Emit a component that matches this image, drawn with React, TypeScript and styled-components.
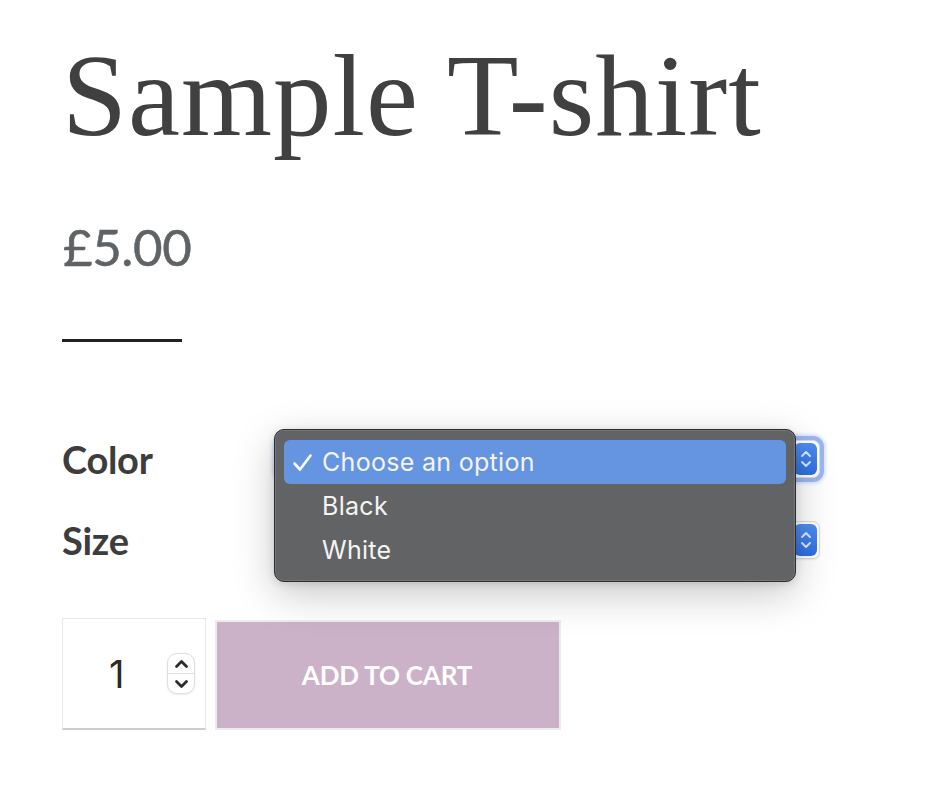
import React from "react";
import styled, { createGlobalStyle } from "styled-components";

const Global = createGlobalStyle`
  html, body { margin: 0; padding: 0; background: #ffffff; }
  body { font-family: "Lato", "Open Sans", sans-serif; }
`;

const Page = styled.div`
  padding: 37px 0 0 62px;
  width: 934px;
  height: 812px;
  box-sizing: border-box;
  position: relative;
  overflow: hidden;
`;

const Title = styled.h1`
  margin: 0;
  font-family: "Liberation Serif", "Times New Roman", serif;
  font-weight: 400;
  font-size: 117px;
  line-height: 117px;
  color: #404040;
  letter-spacing: 1px;
`;

const Price = styled.p`
  margin: 68px 0 0 1px;
  font-family: "Lato", sans-serif;
  font-size: 51px;
  line-height: 50px;
  color: #5f6366;
  letter-spacing: -0.4px;
  -webkit-text-stroke: 0.5px #5f6366;
`;

const Divider = styled.hr`
  margin: 67px 0 0 0;
  width: 120px;
  height: 3px;
  border: 0;
  background: #222222;
`;

const Variations = styled.div`
  margin-top: 76px;
  display: flex;
  flex-direction: column;
  position: relative;
`;

const Row = styled.div`
  height: 81px;
  display: grid;
  grid-template-columns: 216px 542px;
  align-items: center;
`;

const Label = styled.label`
  font-family: "Lato", sans-serif;
  font-weight: 700;
  font-size: 38px;
  line-height: 44px;
  color: #3d3d3d;
  letter-spacing: -0.3px;
`;

const SelectBox = styled.div<{ $focused?: boolean }>`
  height: 38px;
  box-sizing: border-box;
  border-radius: 7px;
  background: #ffffff;
  border: 1px solid #dcdcdc;
  box-shadow: ${(p) =>
    p.$focused
      ? "0 0 0 4px rgba(110, 150, 240, 0.6), 0 0 3px 6px rgba(110,150,240,0.25)"
      : "0 1px 2px rgba(0,0,0,0.08)"};
  display: flex;
  align-items: center;
  justify-content: flex-end;
  padding: 0 2px 0 12px;
`;

const Stepper = styled.div`
  width: 23px;
  height: 32px;
  border-radius: 6px;
  background: linear-gradient(#4d8ef2, #2f6fe0);
  display: flex;
  align-items: center;
  justify-content: center;
`;

const Popup = styled.div`
  position: absolute;
  left: 212px;
  top: 11px;
  width: 522px;
  height: 153px;
  box-sizing: border-box;
  background: #626365;
  border: 1px solid #2e2e30;
  border-radius: 10px;
  box-shadow: inset 0 0 0 1px rgba(255, 255, 255, 0.12),
    0 12px 40px rgba(0, 0, 0, 0.22), 0 2px 8px rgba(0, 0, 0, 0.12);
  padding: 10px 9px 9px;
  display: flex;
  flex-direction: column;
`;

const Item = styled.div<{ $active?: boolean }>`
  height: 44px;
  flex: none;
  border-radius: 6px;
  background: ${(p) => (p.$active ? "#6595e1" : "transparent")};
  display: flex;
  align-items: center;
  font-family: "Inter", "Noto Sans", sans-serif;
  font-size: 25px;
  color: #f4f4f4;
  letter-spacing: 0.3px;
`;

const Check = styled.span`
  width: 38px;
  display: flex;
  justify-content: flex-end;
  padding-right: 9px;
  box-sizing: border-box;
`;

const CartRow = styled.div`
  margin-top: 38px;
  display: flex;
  align-items: flex-start;
  gap: 9px;
`;

const Qty = styled.div`
  width: 144px;
  height: 112px;
  box-sizing: border-box;
  border: 1px solid #e8e8e8;
  border-bottom: 2px solid #cfcfcf;
  display: flex;
  align-items: center;
  padding-left: 46px;
  gap: 44px;
`;

const QtyValue = styled.span`
  font-family: "Inter", "Noto Sans", sans-serif;
  font-size: 38px;
  color: #2a2a2a;
  width: 14px;
`;

const Spin = styled.div`
  width: 28px;
  height: 41px;
  box-sizing: border-box;
  border: 1px solid #dedede;
  border-radius: 10px;
  background: #fff;
  box-shadow: 0 1px 2px rgba(0, 0, 0, 0.08);
  display: flex;
  flex-direction: column;
`;

const SpinHalf = styled.div<{ $top?: boolean }>`
  flex: 1;
  display: flex;
  align-items: center;
  justify-content: center;
  border-bottom: ${(p) => (p.$top ? "1px solid #dedede" : "0")};
`;

const CartButton = styled.button`
  margin-top: 2px;
  width: 346px;
  height: 110px;
  box-sizing: border-box;
  border: 2px solid #ececec;
  background: #ccb2c9;
  color: #ffffff;
  font-family: "Lato", sans-serif;
  font-weight: 700;
  font-size: 26px;
  letter-spacing: -0.2px;
  padding: 0;
  padding-right: 2px;
`;

const StepIcon = () => (
  <svg width="14" height="24" viewBox="0 0 14 24" fill="none">
    <path d="M3 9 L7 5 L11 9" stroke="#dbe6fb" strokeWidth="1.9" strokeLinecap="round" strokeLinejoin="round" />
    <path d="M3 15 L7 19 L11 15" stroke="#dbe6fb" strokeWidth="1.9" strokeLinecap="round" strokeLinejoin="round" />
  </svg>
);

const Chevron = ({ up }: { up?: boolean }) => (
  <svg width="15" height="10" viewBox="0 0 15 10" fill="none">
    <path
      d={up ? "M2.5 7.5 L7.5 2.5 L12.5 7.5" : "M2.5 2.5 L7.5 7.5 L12.5 2.5"}
      stroke="#2b2b2b"
      strokeWidth="2.8"
      strokeLinecap="round"
      strokeLinejoin="round"
    />
  </svg>
);

export default function App() {
  return (
    <>
      <Global />
      <Page>
        <Title>Sample T-shirt</Title>
        <Price>£5.00</Price>
        <Divider />
        <Variations>
          <Row>
            <Label>Color</Label>
            <SelectBox $focused>
              <Stepper>
                <StepIcon />
              </Stepper>
            </SelectBox>
          </Row>
          <Row>
            <Label>Size</Label>
            <SelectBox>
              <Stepper>
                <StepIcon />
              </Stepper>
            </SelectBox>
          </Row>
          <Popup>
            <Item $active>
              <Check>
                <svg width="21" height="19" viewBox="0 0 21 19" fill="none">
                  <path d="M2.5 10.5 L8 16.5 L18.5 2.5" stroke="#ffffff" strokeWidth="2.6" strokeLinecap="round" strokeLinejoin="round" />
                </svg>
              </Check>
              Choose an option
            </Item>
            <Item>
              <Check />
              Black
            </Item>
            <Item>
              <Check />
              White
            </Item>
          </Popup>
        </Variations>
        <CartRow>
          <Qty>
            <QtyValue>1</QtyValue>
            <Spin>
              <SpinHalf $top>
                <Chevron up />
              </SpinHalf>
              <SpinHalf>
                <Chevron />
              </SpinHalf>
            </Spin>
          </Qty>
          <CartButton>ADD TO CART</CartButton>
        </CartRow>
      </Page>
    </>
  );
}
